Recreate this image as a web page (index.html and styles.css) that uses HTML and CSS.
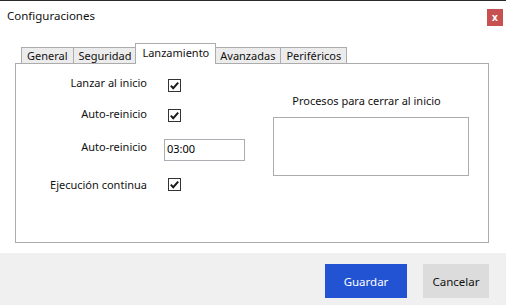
FILE: index.html
```html
<!DOCTYPE html>
<html lang="es">
<head>
<meta charset="utf-8">
<title>Configuraciones</title>
<link rel="stylesheet" href="styles.css">
</head>
<body>
<div class="window">
  <div class="titlebar">
    <span class="title">Configuraciones</span>
    <span class="close">x</span>
  </div>
  <div class="tabs-area">
    <div class="tabstrip">
      <div class="tab">General</div>
      <div class="tab">Seguridad</div>
      <div class="tab active">Lanzamiento</div>
      <div class="tab">Avanzadas</div>
      <div class="tab">Periféricos</div>
    </div>
    <div class="panel">
      <div class="form">
        <div class="row row1">
          <span class="label">Lanzar al inicio</span>
          <span class="control"><svg class="check" width="13" height="13" viewBox="0 0 13 13"><rect x="0.5" y="0.5" width="12" height="12" fill="#fff" stroke="#333"/><path d="M2.8 6.6 L5.2 9.2 L10.2 3.6" fill="none" stroke="#1a1a1a" stroke-width="2"/></svg></span>
        </div>
        <div class="row row2">
          <span class="label">Auto-reinicio</span>
          <span class="control"><svg class="check" width="13" height="13" viewBox="0 0 13 13"><rect x="0.5" y="0.5" width="12" height="12" fill="#fff" stroke="#333"/><path d="M2.8 6.6 L5.2 9.2 L10.2 3.6" fill="none" stroke="#1a1a1a" stroke-width="2"/></svg></span>
        </div>
        <div class="row row3">
          <span class="label">Auto-reinicio</span>
          <span class="control"><span class="input">03:00</span></span>
        </div>
        <div class="row row4">
          <span class="label">Ejecución continua</span>
          <span class="control"><svg class="check" width="13" height="13" viewBox="0 0 13 13"><rect x="0.5" y="0.5" width="12" height="12" fill="#fff" stroke="#333"/><path d="M2.8 6.6 L5.2 9.2 L10.2 3.6" fill="none" stroke="#1a1a1a" stroke-width="2"/></svg></span>
        </div>
      </div>
      <div class="procesos">
        <div class="procesos-title">Procesos para cerrar al inicio</div>
        <div class="listbox"></div>
      </div>
    </div>
  </div>
  <div class="footer">
    <button class="btn primary">Guardar</button>
    <button class="btn secondary">Cancelar</button>
  </div>
</div>
</body>
</html>
```
FILE: styles.css
```css
html, body {
  margin: 0;
  padding: 0;
  background: #fff;
}
body {
  font-family: "Noto Sans", "Open Sans", sans-serif;
  font-size: 11px;
  color: #000;
}
.window {
  width: 506px;
  height: 305px;
  box-sizing: border-box;
  border-top: 1px solid #2a2a2a;
  display: flex;
  flex-direction: column;
  background: #fff;
}
.titlebar {
  height: 29px;
  display: flex;
  align-items: center;
  justify-content: space-between;
  padding: 0 3px 0 7px;
}
.title {
  font-size: 11.5px;
  color: #111;
}
.close {
  align-self: flex-start;
  margin-top: 8px;
  width: 16px;
  height: 17px;
  background: #c75050;
  color: #fff;
  font-weight: bold;
  font-size: 10px;
  line-height: 16px;
  text-align: center;
}
.tabs-area {
  margin: 13px 17px 0 15px;
}
.tabstrip {
  display: flex;
  align-items: flex-end;
  height: 20px;
  padding-left: 6px;
  position: relative;
  z-index: 1;
}
.tab {
  height: 15px;
  line-height: 15px;
  border: 1px solid #acacac;
  border-bottom: none;
  background: #ececec;
  padding: 0 5px;
  margin-right: -1px;
  color: #111;
}
.tab.active {
  height: 20px;
  line-height: 18px;
  background: #fff;
  margin-bottom: -1px;
  margin-left: -1px;
  margin-right: -2px;
  padding: 0 6px;
  position: relative;
  z-index: 2;
}
.panel {
  height: 180px;
  box-sizing: border-box;
  border: 1px solid #acacac;
  display: flex;
}
.form {
  display: flex;
  flex-direction: column;
  padding-top: 10px;
}
.row {
  display: flex;
  align-items: center;
  height: 22px;
}
.label {
  width: 131px;
  text-align: right;
  color: #111;
}
.control {
  margin-left: 17px;
  display: flex;
  align-items: center;
}
.check {
  display: block;
  margin-left: 4px;
}
.row1 .label { padding-bottom: 5px; }
.row2 { margin-top: 8px; }
.row2 .label { padding-bottom: 4px; }
.row3 { margin-top: 13px; }
.row3 .label { padding-bottom: 8px; }
.row4 { margin-top: 12px; }
.input {
  display: block;
  width: 81px;
  height: 22px;
  box-sizing: border-box;
  border: 1px solid #abadb3;
  padding: 0 2px;
  line-height: 18px;
  font-size: 11px;
  color: #000;
}
.procesos {
  margin-left: auto;
  margin-right: 19px;
  width: 196px;
  padding-top: 29px;
}
.procesos-title {
  text-align: center;
  padding-right: 9px;
  height: 15px;
  line-height: 15px;
  color: #111;
}
.listbox {
  margin-top: 9px;
  height: 59px;
  box-sizing: border-box;
  border: 1px solid #acacac;
  background: #fff;
}
.footer {
  margin-top: 10px;
  flex: 1;
  background: #f0f0f0;
  display: flex;
  justify-content: flex-end;
  align-items: flex-start;
  gap: 16px;
  padding: 11px 17px 0 0;
}
.btn {
  height: 34px;
  border: none;
  font-family: "Noto Sans", "Open Sans", sans-serif;
  font-size: 11.5px;
  padding: 0;
}
.primary {
  width: 82px;
  background: #2153d3;
  color: #fff;
}
.secondary {
  width: 66px;
  background: #dcdcdc;
  color: #111;
}
```
